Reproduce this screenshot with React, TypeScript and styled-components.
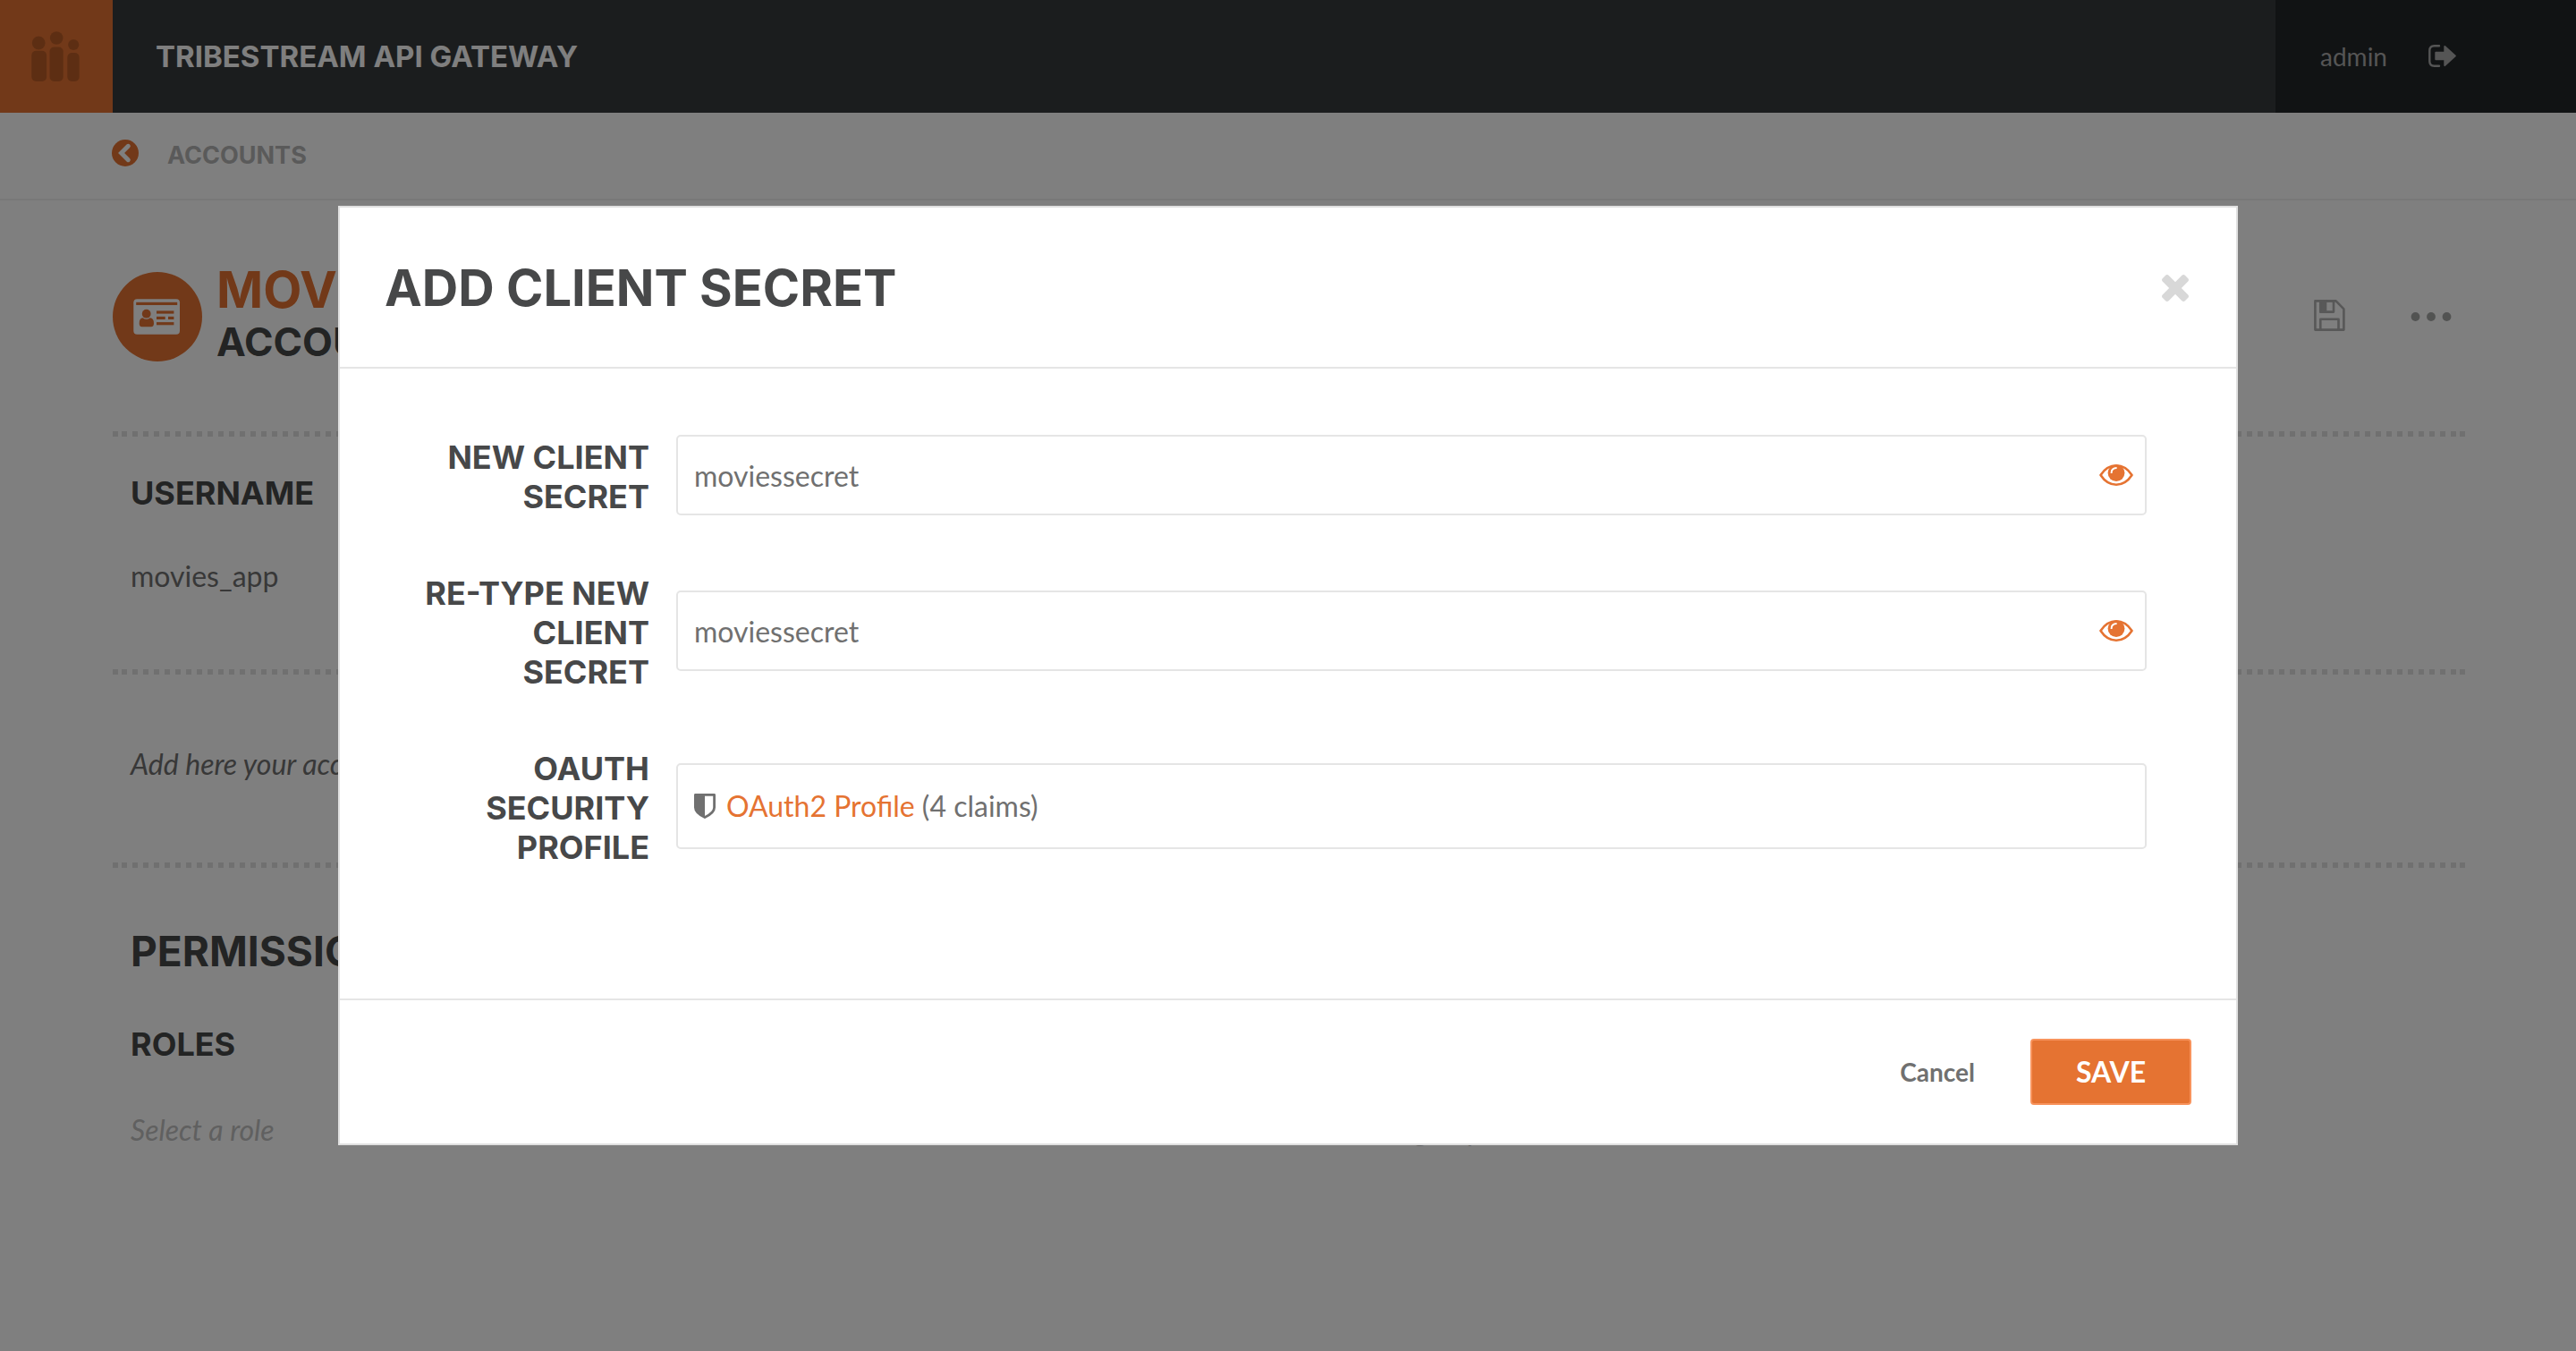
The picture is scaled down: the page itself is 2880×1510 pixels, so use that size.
import React, { useState } from "react";
import styled, { createGlobalStyle, css } from "styled-components";

const color = {
  orange: "#e57332",
  orangeLight: "#f8935c",
  heading: "#474849",
  text: "#707070",
  muted: "#c0c0c0",
  line: "#e5e5e5",
  dots: "#e1e1e1",
};

const headingFont = css`
  font-family: Inter, "Open Sans", "Liberation Sans", sans-serif;
  font-weight: 700;
  text-transform: uppercase;
`;

const GlobalStyle = createGlobalStyle`
  *, *::before, *::after { box-sizing: border-box; }
  body {
    margin: 0;
    background: #fff;
    color: ${color.text};
    font-family: Lato, "Open Sans", sans-serif;
    font-size: 32px;
    line-height: 40px;
  }
  h1, h2, h3, p { margin: 0; }
  svg { display: block; }
`;

/* ---------- page ---------- */

const Page = styled.div`
  min-height: 100vh;
`;

const TopBar = styled.header`
  display: flex;
  height: 126px;
  background: #373a3d;
`;

const Logo = styled.a`
  width: 126px;
  flex: none;
  background: ${color.orange};
`;

const Brand = styled.div`
  ${headingFont}
  flex: 1;
  align-self: center;
  padding-left: 48px;
  font-size: 33px;
  line-height: 40px;
  color: #fff;
`;

const UserMenu = styled.div`
  display: flex;
  align-items: center;
  justify-content: space-between;
  width: 336px;
  padding: 0 134px 0 50px;
  background: #222629;
  color: #aaa;
  font-size: 28px;
`;

const IconButton = styled.button`
  display: flex;
  align-items: center;
  justify-content: center;
  padding: 0;
  border: 0;
  background: none;
  color: inherit;
  cursor: pointer;
`;

const Breadcrumb = styled.nav`
  display: flex;
  align-items: center;
  gap: 32px;
  height: 98px;
  padding: 0 125px;
  border-bottom: 2px solid #f0f0f0;
  color: ${color.orange};
`;

const Crumb = styled.a`
  ${headingFont}
  font-size: 27px;
  line-height: 40px;
  color: #b4b4b4;
  text-decoration: none;
`;

const Content = styled.main`
  padding: 0 124px 0 126px;
`;

const AccountHead = styled.div`
  display: flex;
  align-items: center;
  gap: 16px;
  padding: 72px 0 70px;
`;

const Avatar = styled.div`
  flex: none;
  width: 100px;
  height: 100px;
`;

const AccountTitles = styled.div`
  flex: 1;
`;

const AccountName = styled.h1`
  ${headingFont}
  font-size: 56px;
  line-height: 56px;
  color: ${color.orange};
`;

const AccountKind = styled.h2`
  ${headingFont}
  font-size: 44px;
  line-height: 60px;
  color: ${color.heading};
`;

const HeadActions = styled.div`
  display: flex;
  align-items: center;
  gap: 73px;
  padding-right: 15px;
  color: #b0b0b0;
`;

const Section = styled.section<{ $top: number; $bottom: number }>`
  padding: ${(p) => p.$top}px 20px ${(p) => p.$bottom}px;
  position: relative;
  &::before {
    content: "";
    position: absolute;
    inset: 0 0 auto;
    height: 6px;
    background:
      linear-gradient(${color.dots}, ${color.dots}) left / 6px 6px no-repeat,
      linear-gradient(${color.dots}, ${color.dots}) right / 6px 6px no-repeat,
      repeating-linear-gradient(
        90deg,
        ${color.dots} 0 4px,
        transparent 4px 10px,
        ${color.dots} 10px 12px
      );
  }
`;

const SectionTitle = styled.h2`
  ${headingFont}
  margin-bottom: 54px;
  font-size: 46px;
  line-height: 56px;
  color: ${color.heading};
`;

const FieldTitle = styled.h3<{ $gap: number }>`
  ${headingFont}
  margin-bottom: ${(p) => p.$gap}px;
  font-size: 36px;
  line-height: 44px;
  color: ${color.heading};
`;

const Description = styled.p`
  font-style: italic;
`;

const Columns = styled.div`
  display: grid;
  grid-template-columns: 1fr 1fr;
  gap: 60px;
`;

const Placeholder = styled.p`
  font-style: italic;
  color: ${color.muted};
`;

/* ---------- modal ---------- */

const Backdrop = styled.div`
  position: fixed;
  inset: 0;
  background: rgba(0, 0, 0, 0.5);
`;

const Modal = styled.div`
  width: 73.75%;
  margin: 230px auto 0;
  border: 2px solid #e0e0e0;
  background: #fff;
`;

const ModalHead = styled.div`
  display: flex;
  align-items: center;
  justify-content: space-between;
  height: 180px;
  padding: 2px 53px 0 50px;
  border-bottom: 2px solid ${color.line};
`;

const ModalTitle = styled.h2`
  ${headingFont}
  font-size: 56px;
  line-height: 64px;
  color: ${color.heading};
`;

const CloseButton = styled(IconButton)`
  color: #d8d8d8;
`;

const ModalBody = styled.div`
  display: flex;
  flex-direction: column;
  gap: 60px;
  padding: 73px 100px 147px 50px;
`;

const FormRow = styled.div`
  display: grid;
  grid-template-columns: 296px 1fr;
  gap: 30px;
  align-items: center;
`;

const Label = styled.label`
  ${headingFont}
  padding: 4px 0 0 30px;
  font-size: 36px;
  line-height: 44px;
  text-align: right;
  color: ${color.heading};
`;

const Field = styled.div<{ $tall?: boolean }>`
  display: flex;
  align-items: center;
  height: ${(p) => (p.$tall ? 96 : 90)}px;
  padding: 0 13px 0 18px;
  border: 2px solid ${color.line};
  border-radius: 5px;
`;

const Input = styled.input`
  flex: 1;
  min-width: 0;
  height: 100%;
  padding: 0;
  border: 0;
  outline: 0;
  background: none;
  color: ${color.text};
  font: inherit;
`;

const EyeButton = styled(IconButton)`
  color: ${color.orange};
`;

const ProfileText = styled.span`
  margin-left: 12px;
`;

const ProfileLink = styled.a`
  color: ${color.orange};
  text-decoration: none;
`;

const ModalFoot = styled.div`
  display: flex;
  align-items: center;
  justify-content: flex-end;
  gap: 62px;
  height: 162px;
  padding: 0 50px;
  border-top: 2px solid ${color.line};
`;

const CancelButton = styled.button`
  padding: 0;
  border: 0;
  background: none;
  color: ${color.text};
  font: 700 28px/40px Lato, sans-serif;
  cursor: pointer;
`;

const SaveButton = styled.button`
  width: 180px;
  height: 74px;
  padding: 0;
  border: 2px solid ${color.orangeLight};
  border-radius: 4px;
  background: ${color.orange};
  color: #fff;
  font: 700 32px/40px Lato, sans-serif;
  cursor: pointer;
`;

/* ---------- icons ---------- */

const LogoIcon = () => (
  <svg width="126" height="126" viewBox="0 0 126 126" fill="#bb5d27">
    <circle cx="43.2" cy="48" r="7.4" />
    <circle cx="63.2" cy="42.5" r="7.3" />
    <circle cx="82.2" cy="50" r="6.1" />
    <rect x="35.3" y="56.8" width="16.8" height="34.2" rx="5" />
    <rect x="55.5" y="52.6" width="15.2" height="38.4" rx="5" />
    <rect x="75.3" y="59" width="13.4" height="32" rx="5" />
  </svg>
);

const SignOutIcon = () => (
  <svg width="31" height="26" viewBox="0 0 31 26" fill="none" stroke="currentColor">
    <path d="M12 1.3H6.5Q1.3 1.3 1.3 6.5v12Q1.3 23.7 6.5 23.7H12" strokeWidth="2.4" strokeLinecap="round" />
    <path
      d="M8.3 8.8H18.3V1.9L29.8 12.5L18.3 23.1V16.3H8.3Z"
      fill="currentColor"
      strokeWidth="2"
      strokeLinejoin="round"
    />
  </svg>
);

const BackIcon = () => (
  <svg width="30" height="36" viewBox="0 0 30 36">
    <circle cx="15" cy="15" r="15" fill="currentColor" />
    <path
      d="M18.3 7.3L10.6 15L18.3 22.7"
      fill="none"
      stroke="#fff"
      strokeWidth="5"
      strokeLinejoin="miter"
      strokeLinecap="round"
    />
  </svg>
);

const AvatarIcon = () => (
  <svg width="100" height="100" viewBox="0 0 100 100" fill={color.orange}>
    <circle cx="50" cy="50" r="50" />
    <rect x="23.3" y="30.2" width="51.7" height="39.5" rx="4" fill="#fff" />
    <rect x="26.2" y="33.8" width="46" height="3.2" />
    <circle cx="37.7" cy="46.7" r="4.9" />
    <path d="M33.6 51.2Q37.7 54.2 41.8 51.2Q46 51.4 46 57.5Q46 61.2 43 61.2H32.6Q29.7 61.2 29.7 57.5Q29.7 51.4 33.6 51.2Z" />
    <rect x="49" y="43.4" width="19.4" height="3.2" />
    <rect x="49" y="49.8" width="9.7" height="3.2" />
    <rect x="62" y="49.8" width="6.4" height="3.2" />
    <rect x="49" y="56.1" width="19.4" height="3.2" />
  </svg>
);

const DiskIcon = () => (
  <svg width="35" height="39" viewBox="0 0 35 39" fill="none" stroke="currentColor" strokeWidth="2.6" strokeLinejoin="round">
    <path d="M1.4 1.4H24.6L33.4 10.4V33.6H1.4Z" />
    <path d="M7.3 1.4H22V13.6H7.3Z" />
    <path d="M7.3 1.4H13V13.6H7.3Z" fill="currentColor" />
    <path d="M7.3 33.6V21.7H27.5V33.6" />
  </svg>
);

const MoreIcon = () => (
  <svg width="46" height="12" viewBox="0 0 46 12" fill="#a4a6a5">
    <circle cx="5.5" cy="6" r="4.9" />
    <circle cx="23" cy="6" r="4.9" />
    <circle cx="40.5" cy="6" r="4.9" />
  </svg>
);

const CloseIcon = () => (
  <svg width="30" height="30" viewBox="302 366 1188 1188" fill="currentColor">
    <path d="M1490 1322q0 40-28 68l-136 136q-28 28-68 28t-68-28l-294-294-294 294q-28 28-68 28t-68-28l-136-136q-28-28-28-68t28-68l294-294-294-294q-28-28-28-68t28-68l136-136q28-28 68-28t68 28l294 294 294-294q28-28 68-28t68 28l136 136q28 28 28 68t-28 68l-294 294 294 294q28 28 28 68z" />
  </svg>
);

const EyeIcon = () => (
  <svg width="38" height="24" viewBox="0 0 38 24">
    <path
      d="M1.5 12Q8.5 1.3 19 1.3Q29.5 1.3 36.5 12Q29.5 22.7 19 22.7Q8.5 22.7 1.5 12Z"
      fill="none"
      stroke="currentColor"
      strokeWidth="2.6"
      strokeLinejoin="round"
    />
    <circle cx="19" cy="9.6" r="9.4" fill="currentColor" />
    <path d="M13.6 10V9.4Q13.6 4.1 19.6 4" fill="none" stroke="#fff" strokeWidth="1.9" />
  </svg>
);

const ShieldIcon = () => (
  <svg width="24" height="28" viewBox="0 0 24 28">
    <path
      d="M1.4 1.4H22.6V15.5Q22.6 21.5 12 26.5Q1.4 21.5 1.4 15.5Z"
      fill="none"
      stroke="currentColor"
      strokeWidth="2.8"
      strokeLinejoin="round"
    />
    <path d="M1.4 1.4H12V26.5Q1.4 21.5 1.4 15.5Z" fill="currentColor" />
  </svg>
);

/* ---------- components ---------- */

function SecretRow({ id, label }: { id: string; label: string }) {
  const [value, setValue] = useState("moviessecret");
  const [visible, setVisible] = useState(true);
  return (
    <FormRow>
      <Label htmlFor={id}>{label}</Label>
      <Field>
        <Input
          id={id}
          type={visible ? "text" : "password"}
          value={value}
          onChange={(e) => setValue(e.target.value)}
        />
        <EyeButton type="button" aria-label="Toggle visibility" onClick={() => setVisible(!visible)}>
          <EyeIcon />
        </EyeButton>
      </Field>
    </FormRow>
  );
}

function AccountPage() {
  return (
    <Page>
      <TopBar>
        <Logo href="#" aria-label="Home">
          <LogoIcon />
        </Logo>
        <Brand>Tribestream API Gateway</Brand>
        <UserMenu>
          <span>admin</span>
          <IconButton type="button" aria-label="Sign out">
            <SignOutIcon />
          </IconButton>
        </UserMenu>
      </TopBar>
      <Breadcrumb>
        <BackIcon />
        <Crumb href="#">Accounts</Crumb>
      </Breadcrumb>
      <Content>
        <AccountHead>
          <Avatar>
            <AvatarIcon />
          </Avatar>
          <AccountTitles>
            <AccountName>Movies App</AccountName>
            <AccountKind>Account</AccountKind>
          </AccountTitles>
          <HeadActions>
            <IconButton type="button" aria-label="Save account">
              <DiskIcon />
            </IconButton>
            <IconButton type="button" aria-label="More actions">
              <MoreIcon />
            </IconButton>
          </HeadActions>
        </AccountHead>
        <Section $top={47} $bottom={84}>
          <FieldTitle $gap={51}>Username</FieldTitle>
          <p>movies_app</p>
        </Section>
        <Section $top={86} $bottom={90}>
          <Description>Add here your account description</Description>
        </Section>
        <Section $top={71} $bottom={60}>
          <SectionTitle>Permissions</SectionTitle>
          <Columns>
            <div>
              <FieldTitle $gap={54}>Roles</FieldTitle>
              <Placeholder>Select a role</Placeholder>
            </div>
            <div>
              <FieldTitle $gap={54}>Groups</FieldTitle>
              <Placeholder>Select a group</Placeholder>
            </div>
          </Columns>
        </Section>
      </Content>
    </Page>
  );
}

export default function App() {
  return (
    <>
      <GlobalStyle />
      <AccountPage />
      <Backdrop>
        <Modal role="dialog" aria-modal="true" aria-labelledby="modal-title">
          <ModalHead>
            <ModalTitle id="modal-title">Add client secret</ModalTitle>
            <CloseButton type="button" aria-label="Close">
              <CloseIcon />
            </CloseButton>
          </ModalHead>
          <ModalBody>
            <SecretRow id="secret" label="New client secret" />
            <SecretRow id="secret-repeat" label="Re-type new client secret" />
            <FormRow role="group" aria-labelledby="profile-label">
              <Label as="span" id="profile-label">
                OAuth security profile
              </Label>
              <Field $tall>
                <ShieldIcon />
                <ProfileText>
                  <ProfileLink href="#">OAuth2 Profile</ProfileLink> (4 claims)
                </ProfileText>
              </Field>
            </FormRow>
          </ModalBody>
          <ModalFoot>
            <CancelButton type="button">Cancel</CancelButton>
            <SaveButton type="button">SAVE</SaveButton>
          </ModalFoot>
        </Modal>
      </Backdrop>
    </>
  );
}
